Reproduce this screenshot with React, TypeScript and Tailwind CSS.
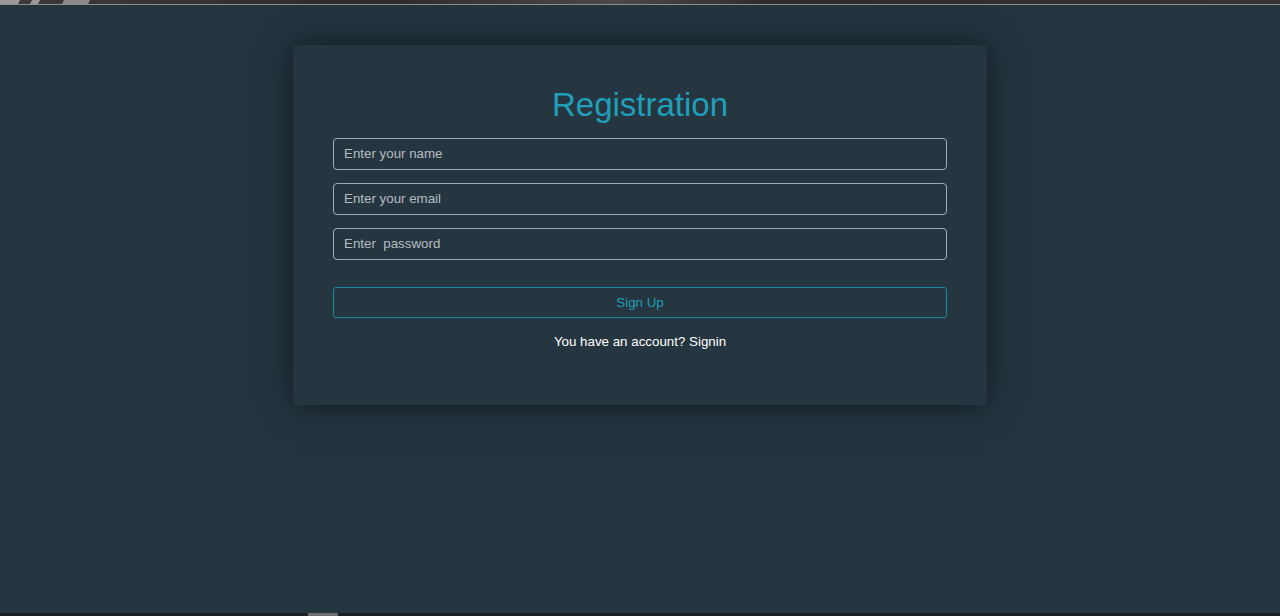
export default function App() {
    return (
        <div className="flex h-[616px] w-full flex-col overflow-hidden bg-[#253540] font-['Liberation_Sans',Arial,sans-serif]">

            {/* Top strip */}
            <div className="h-[4px] w-full bg-[linear-gradient(90deg,#3a3a3a_0%,#2c2c2c_30%,#4a4a4a_48%,#2e2e2e_60%,#333_100%)]">
                <svg width="90" height="4" viewBox="0 0 90 4">
                    <polygon points="0,0 20,0 18,4 0,4" fill="#9a9a9a" />
                    <polygon points="32,0 40,0 38,4 30,4" fill="#9a9a9a" />
                    <polygon points="64,0 90,0 88,4 62,4" fill="#8a8a8a" />
                </svg>
            </div>
            <div className="h-px w-full bg-[#8e8e8e]" />

            {/* Card */}
            <div className="flex flex-1 justify-center pt-[40px]">
                <div className="h-[360px] w-[694px] bg-[#263640] px-[40px] pt-[41px] shadow-[0_0_30px_rgba(0,0,0,0.55)]">
                    <h1 className="mb-[15px] text-center text-[33px] leading-[37px] text-[#1f9fba]">
                        Registration
                    </h1>
                    <div className="flex flex-col gap-[13px]">
                        <input
                            className="h-[32px] w-full rounded-[4px] border border-[#a3adb3] bg-transparent px-[10px] pb-[1px] text-[13.33px] text-[#c3c9cd] placeholder:text-[#b5bcc1] focus:outline-none"
                            placeholder="Enter your name"
                        />
                        <input
                            className="h-[32px] w-full rounded-[4px] border border-[#a3adb3] bg-transparent px-[10px] pb-[1px] text-[13.33px] text-[#c3c9cd] placeholder:text-[#b5bcc1] focus:outline-none"
                            placeholder="Enter your email"
                        />
                        <input
                            type="password"
                            className="h-[32px] w-full rounded-[4px] border border-[#a3adb3] bg-transparent px-[10px] pb-[1px] text-[13.33px] text-[#c3c9cd] placeholder:text-[#b5bcc1] focus:outline-none"
                            placeholder="Enter  password"
                        />
                    </div>
                    <button className="mt-[27px] h-[31px] w-full rounded-[3px] border border-[#1b8a9f] bg-transparent text-[13.33px] text-[#1f9fba]">
                        Sign Up
                    </button>
                    <p className="mt-[15px] text-center text-[13.33px] leading-[17px] text-white">
                        You have an account? Signin
                    </p>
                </div>
            </div>

            {/* Bottom strip */}
            <div className="flex h-[3px] w-full bg-[#1c1f21] pl-[308px]">
                <div className="h-full w-[30px] bg-[#6e6e6e]" />
            </div>
        </div>
    );
}
